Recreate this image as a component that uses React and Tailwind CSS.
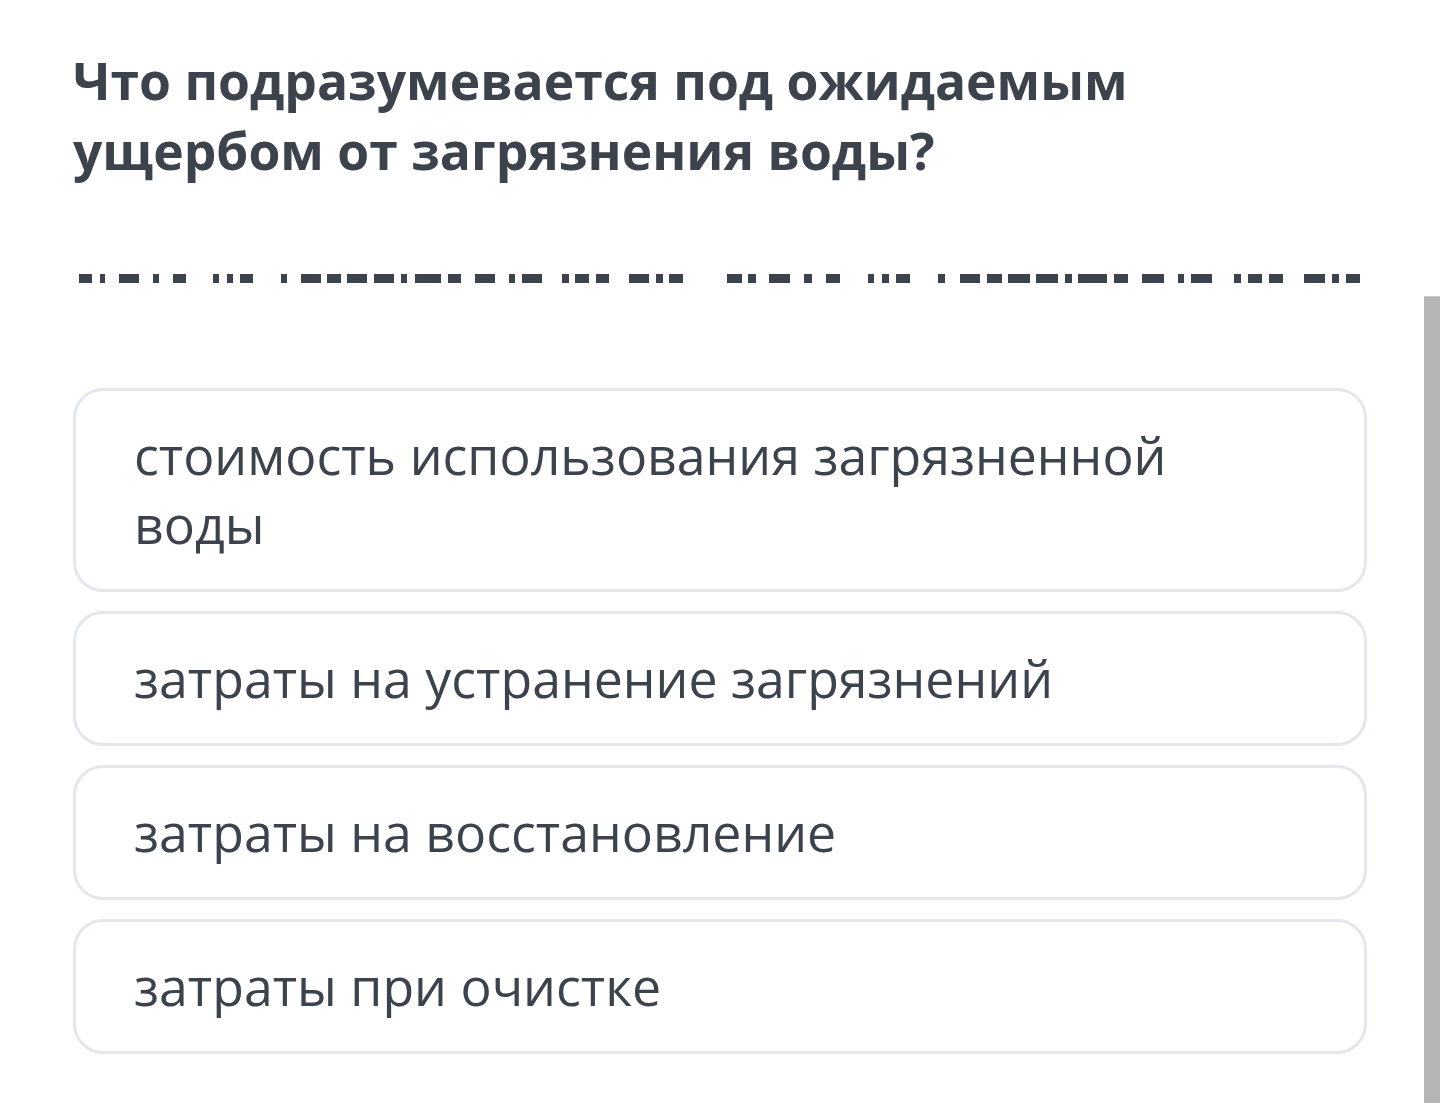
import React from 'react'

const question = 'Что подразумевается под ожидаемым ущербом от загрязнения воды?'

const answers = [
  'стоимость использования загрязненной воды',
  'затраты на устранение загрязнений',
  'затраты на восстановление',
  'затраты при очистке',
]

// hidden answer blanks, [x, width] in page pixels
const blanks = [
  [79, 13], [100, 5], [119, 20], [153, 6], [173, 13], [213, 6], [227, 6], [240, 13],
  [281, 6], [301, 20], [327, 14], [347, 20], [374, 20], [401, 6], [415, 26], [448, 13],
  [475, 20], [509, 6], [522, 20], [562, 7], [575, 14], [596, 13], [629, 20], [656, 7], [669, 14],
  [727, 15], [748, 8], [769, 21], [804, 8], [826, 14], [868, 6], [882, 7], [896, 14],
  [938, 7], [960, 20], [987, 15], [1008, 22], [1036, 22], [1065, 7], [1078, 29], [1114, 14],
  [1142, 22], [1178, 6], [1191, 21], [1234, 7], [1248, 14], [1269, 14], [1304, 21], [1332, 7], [1346, 14],
]

const App = () => {
  return (
    <div
      className="relative h-[1103px] overflow-hidden bg-white text-[#3c434d]"
      style={{ fontFamily: '"Open Sans", "Noto Sans", sans-serif' }}
    >
      <div className="px-[73px] pt-[45px]">
        {/* Question */}
        <h1 className="text-[51.6px] leading-[70px] font-bold max-w-[1100px]">
          {question}
        </h1>

        {/* Blanks */}
        <svg className="block mt-[89px] -ml-[73px]" width="1440" height="9" viewBox="0 0 1440 9">
          {blanks.map(([x, w], i) => (
            <rect key={i} x={x} y="0" width={w} height="9" fill="#3c434d" />
          ))}
        </svg>

        {/* Answers */}
        <div className="mt-[105px] flex flex-col gap-[19px]">
          {answers.map((a, i) => (
            <div
              key={i}
              className="border-[3px] border-[#e4e7eb] rounded-[30px] pl-[58px] pr-[120px] py-[30px] text-[51.8px] leading-[69px]"
            >
              {a}
            </div>
          ))}
        </div>
      </div>

      {/* Scrollbar thumb */}
      <div className="absolute right-0 top-[296px] bottom-0 w-[16px] bg-[#b5b5b5] border-t border-[#c8c8c8]" />
    </div>
  )
}

export default App
